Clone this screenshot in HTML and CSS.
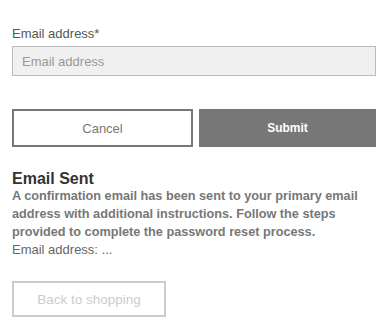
FILE: index.html
```html
<!DOCTYPE html>
<html lang="en">
<head>
    <meta charset="UTF-8">
    <meta name="viewport" content="width=device-width, initial-scale=1.0">
    <title>Reset password</title>
    <link rel="stylesheet" href="styles.css">
</head>
<body>
    <div class="reset-form">
        <label class="field-label" for="email-input">Email address*</label>
        <input type="text" id="email-input" class="field-input" placeholder="Email address">

        <div class="button-row">
            <button class="btn btn-outline">Cancel</button>
            <button class="btn btn-filled">Submit</button>
        </div>

        <div class="sent-message">
            <h2>Email Sent</h2>
            <p class="sent-text">A confirmation email has been sent to your primary email address with additional instructions. Follow the steps provided to complete the password reset process.</p>
            <p class="sent-email">Email address: ...</p>
        </div>

        <button class="btn btn-disabled">Back to shopping</button>
    </div>
</body>
</html>
```

FILE: styles.css
```css
body, html {
    margin: 0;
    font-family: 'Liberation Sans', Arial, sans-serif;
    background: #fff;
    color: #555;
}

.reset-form {
    padding: 27px 11px 0 12px;
}

.field-label {
    display: block;
    font-size: 13px;
    color: #555;
    line-height: 14px;
    margin-bottom: 5px;
}

.field-input {
    display: block;
    box-sizing: border-box;
    width: 100%;
    height: 30px;
    padding: 0 9px;
    font-family: inherit;
    font-size: 13px;
    background: #f0f0f0;
    border: 1px solid #bbb;
    outline: none;
}

.field-input::placeholder {
    color: #999;
}

.button-row {
    display: flex;
    gap: 6px;
    margin-top: 33px;
}

.btn {
    box-sizing: border-box;
    height: 38px;
    font-family: inherit;
    font-size: 13px;
    cursor: pointer;
    background: #fff;
}

.btn-outline {
    flex: 1;
    border: 2px solid #777;
    color: #777;
}

.btn-filled {
    flex: 1;
    border: none;
    background: #777;
    color: #fff;
    font-size: 12px;
    font-weight: bold;
}

.sent-message {
    margin-top: 24px;
}

.sent-message h2 {
    margin: 0;
    font-size: 16px;
    font-weight: bold;
    color: #333;
    line-height: 16px;
}

.sent-text {
    margin: 0;
    font-size: 12.7px;
    font-weight: bold;
    color: #777;
    line-height: 18px;
}

.sent-email {
    margin: 0;
    font-size: 13px;
    color: #666;
    line-height: 18px;
}

.btn-disabled {
    display: block;
    width: 154px;
    height: 36px;
    margin-top: 22px;
    border: 2px solid #ccc;
    color: #ccc;
    font-size: 13.5px;
    cursor: default;
}
```
